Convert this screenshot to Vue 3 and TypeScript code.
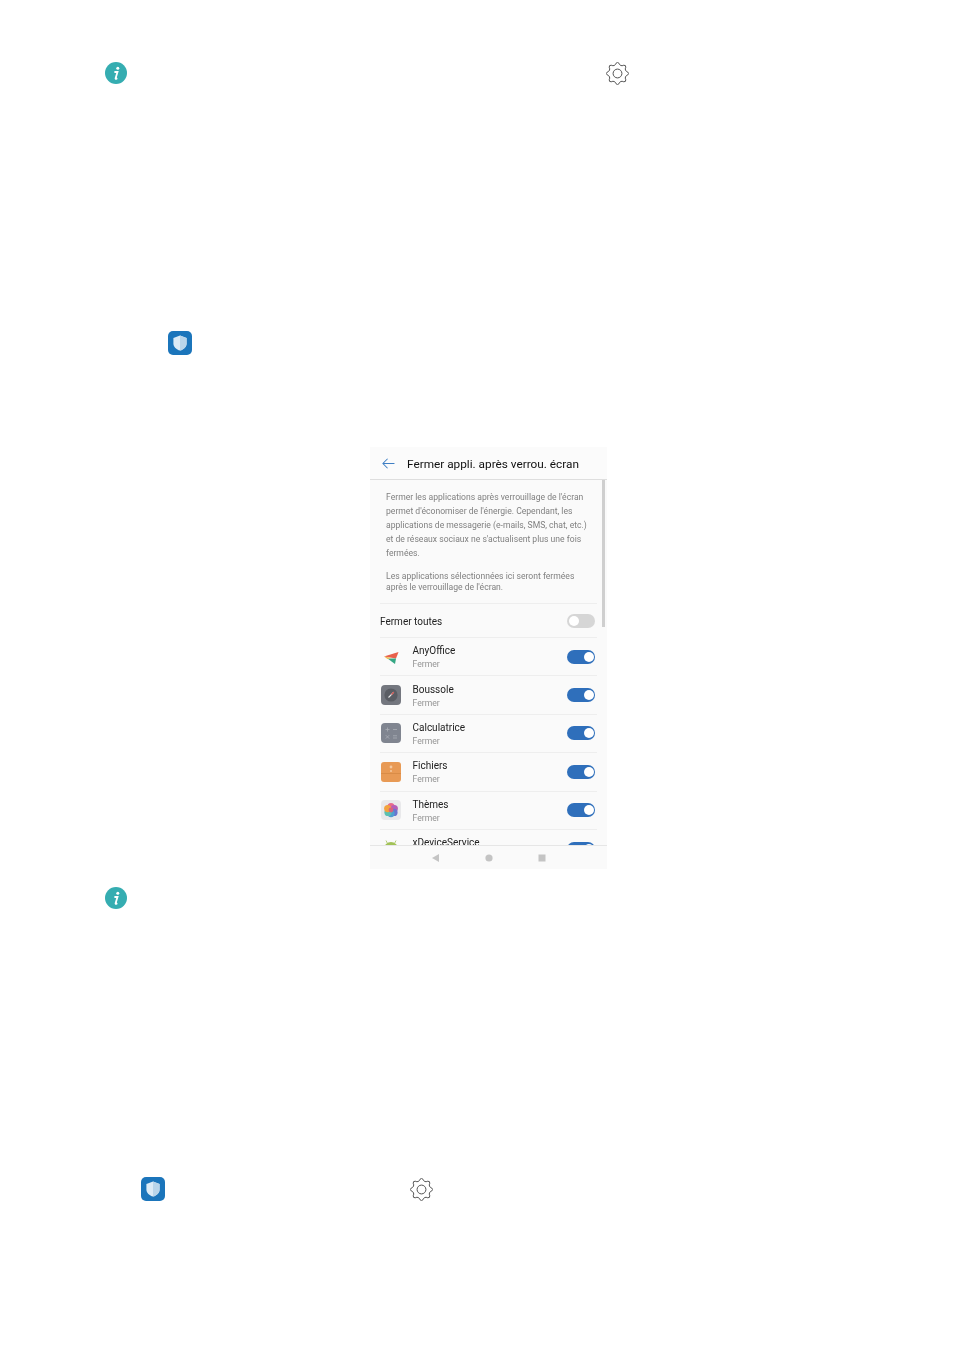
<template>
  <div class="page">
    <div class="note-row first">
      <svg class="info" viewBox="0 0 22 22"><circle cx="11" cy="11" r="11" fill="#35adb1" /><circle cx="12.8" cy="6.2" r="1.5" fill="#fff" /><path d="M9.4 10h3.1l-1.9 6.2q-.2.8.6.6l1.1-.6" fill="none" stroke="#fff" stroke-width="1.8" /></svg>
      <svg class="gear gear-top" viewBox="0 0 24 24"><path :d="gearPath" /><circle cx="12" cy="12" r="4.6" /></svg>
    </div>

    <div class="shield-row one">
      <svg class="shield" viewBox="0 0 24 24"><rect width="24" height="24" rx="5" fill="#1b75bb" /><path d="M12 4.6 18.6 7v5.4c0 3.5-3 5.9-6.6 7.2-3.6-1.3-6.6-3.7-6.6-7.2V7z" fill="#dcebf6" /><path d="M12 4.6 18.6 7v5.4c0 3.5-3 5.9-6.6 7.2z" fill="#b9d5ea" /></svg>
    </div>

    <div class="phone">
      <header class="bar">
        <svg class="back" viewBox="0 0 14 12"><path d="M13.5 6H1M6 .8.9 6 6 11.2" fill="none" stroke="#3f7fc4" stroke-width="1.1" /></svg>
        <span class="title">Fermer appli. après verrou. écran</span>
      </header>

      <div class="content">
        <i class="scroll"></i>
        <div class="desc">
          <p class="para">Fermer les applications après verrouillage de l'écran<br>permet d'économiser de l'énergie. Cependant, les<br>applications de messagerie (e-mails, SMS, chat, etc.)<br>et de réseaux sociaux ne s'actualisent plus une fois<br>fermées.</p>
          <p class="para tight">Les applications sélectionnées ici seront fermées<br>après le verrouillage de l'écran.</p>
        </div>
        <div class="all-row">
          <span class="all-label">Fermer toutes</span>
          <span class="toggle off"><b></b></span>
        </div>
        <div v-for="app in apps" :key="app.name" class="app-row">
          <span class="app-icon">
            <svg v-if="app.kind === 'any'" viewBox="0 0 20 20"><path d="M3 9.5 17.5 5 15 11.5z" fill="#e8604c" /><path d="M6.5 11.5h8.5l-1 5.5z" fill="#35a784" /><path d="M3 9.5l7.5 1.5-4 1z" fill="#f0b84a" /></svg>
            <svg v-else-if="app.kind === 'compass'" viewBox="0 0 20 20"><rect width="20" height="20" rx="4" fill="#74777f" /><circle cx="10" cy="10" r="6.6" fill="#5a5d64" /><path d="M7.5 12.5 12.8 7.2" stroke="#e9e9e9" stroke-width="1.1" /><path d="M10.5 9.5 12.8 7.2" stroke="#d9534f" stroke-width="1.1" /></svg>
            <svg v-else-if="app.kind === 'calc'" viewBox="0 0 20 20"><rect width="20" height="20" rx="4" fill="#808590" /><path d="M4.5 6.5h4M6.5 4.5v4M12 6.5h4M4.8 12.2l3.4 3.4M8.2 12.2l-3.4 3.4M12 12.8h4M12 15h4" stroke="#a9adb5" stroke-width=".8" /></svg>
            <svg v-else-if="app.kind === 'files'" viewBox="0 0 20 20"><rect width="20" height="20" rx="3" fill="#e89a55" /><path d="M0 11.5h20" stroke="#d38642" stroke-width=".7" /><circle cx="10" cy="5" r="1.4" fill="#f5c9a0" /><circle cx="10" cy="9" r="1" fill="#f5c9a0" /></svg>
            <svg v-else-if="app.kind === 'themes'" viewBox="0 0 20 20"><rect width="20" height="20" rx="4" fill="#e9e9eb" /><circle cx="10" cy="6.6" r="3.6" fill="#e86a8e" /><circle cx="13.3" cy="8.6" r="3.6" fill="#b65fb8" /><circle cx="13" cy="12.4" r="3.6" fill="#6a74cf" /><circle cx="10" cy="13.6" r="3.6" fill="#4f9fd0" /><circle cx="7" cy="12.4" r="3.6" fill="#5cc0b0" /><circle cx="6.7" cy="8.6" r="3.6" fill="#f3a13e" /><circle cx="10" cy="10" r="2.4" fill="#d8647c" /></svg>
            <svg v-else viewBox="0 0 20 20"><path d="M3 10a7 7 0 0 1 14 0v8H3z" fill="#a2c257" /><path d="M6.5 4.5 5 1.5M13.5 4.5 15 1.5" stroke="#a2c257" stroke-width=".8" /></svg>
          </span>
          <span class="app-text">
            <span class="app-name">{{ app.name }}</span>
            <span class="app-sub">Fermer</span>
          </span>
          <span class="toggle"><b></b></span>
        </div>
      </div>

      <footer class="nav">
        <svg class="nav-ico" viewBox="0 0 8 8"><path d="M7 0v8L0 4z" fill="#c4c4c4" /></svg>
        <svg class="nav-ico" viewBox="0 0 8 8"><circle cx="4" cy="4" r="3.6" fill="#c4c4c4" /></svg>
        <svg class="nav-ico" viewBox="0 0 8 8"><rect x=".5" y=".5" width="7" height="7" fill="#c4c4c4" /></svg>
      </footer>
    </div>

    <div class="note-row second">
      <svg class="info" viewBox="0 0 22 22"><circle cx="11" cy="11" r="11" fill="#35adb1" /><circle cx="12.8" cy="6.2" r="1.5" fill="#fff" /><path d="M9.4 10h3.1l-1.9 6.2q-.2.8.6.6l1.1-.6" fill="none" stroke="#fff" stroke-width="1.8" /></svg>
    </div>

    <div class="shield-row two">
      <svg class="shield" viewBox="0 0 24 24"><rect width="24" height="24" rx="5" fill="#1b75bb" /><path d="M12 4.6 18.6 7v5.4c0 3.5-3 5.9-6.6 7.2-3.6-1.3-6.6-3.7-6.6-7.2V7z" fill="#dcebf6" /><path d="M12 4.6 18.6 7v5.4c0 3.5-3 5.9-6.6 7.2z" fill="#b9d5ea" /></svg>
      <svg class="gear gear-bottom" viewBox="0 0 24 24"><path :d="gearPath" /><circle cx="12" cy="12" r="4.6" /></svg>
    </div>
  </div>
</template>

<script setup lang="ts">
const apps = [
  { name: 'AnyOffice', kind: 'any' },
  { name: 'Boussole', kind: 'compass' },
  { name: 'Calculatrice', kind: 'calc' },
  { name: 'Fichiers', kind: 'files' },
  { name: 'Thèmes', kind: 'themes' },
  { name: 'xDeviceService', kind: 'android' },
]

// eight lobed gear outline
const gearPath = (() => {
  const lobes = 8
  let d = ''
  for (let i = 0; i < lobes; i++) {
    const a = (i / lobes) * Math.PI * 2 - Math.PI / 2
    const step = Math.PI / lobes
    const pt = (r: number, t: number) => `${(12 + r * Math.cos(t)).toFixed(2)} ${(12 + r * Math.sin(t)).toFixed(2)}`
    d += `${i ? 'L' : 'M'}${pt(10.8, a - step * 0.35)} Q${pt(12.6, a)} ${pt(10.8, a + step * 0.35)} Q${pt(7.6, a + step)} ${pt(10.8, a + step * 1.65)} `
  }
  return d + 'Z'
})()
</script>

<style scoped>
.page {
  height: 1350px;
  overflow: hidden;
  background: #fff;
  font-family: Roboto, "Liberation Sans", sans-serif;
}

.note-row {
  display: flex;
  padding-left: 105px;
}
.first {
  padding-top: 62px;
}
.second {
  margin-top: 18px;
}
.info {
  width: 22px;
  height: 22px;
  flex: none;
}
.gear {
  width: 23px;
  height: 23px;
  flex: none;
  fill: none;
  stroke: #4a4a4a;
  stroke-width: 1;
}
.gear-top {
  margin-left: 479px;
}
.gear-bottom {
  margin-left: 245px;
}

.shield-row {
  display: flex;
  align-items: center;
}
.one {
  margin-top: 246px;
  padding-left: 168px;
}
.two {
  margin-top: 268px;
  padding-left: 141px;
}
.shield {
  width: 24px;
  height: 24px;
  flex: none;
}

.phone {
  width: 237px;
  height: 422px;
  margin: 92px 0 0 370px;
  display: flex;
  flex-direction: column;
  background: #fafafa;
  filter: blur(0.4px);
}
.bar {
  height: 33px;
  flex: none;
  display: flex;
  align-items: center;
  gap: 12px;
  padding: 1px 0 0 12px;
  box-sizing: border-box;
  background: #fbfbfb;
  border-bottom: 1px solid #dedede;
}
.back {
  width: 13px;
  height: 11px;
}
.title {
  font-size: 11.8px;
  color: #111;
}

.content {
  position: relative;
  flex: 1;
  overflow: hidden;
  padding: 0 10px;
}
.scroll {
  position: absolute;
  top: 0;
  right: 2px;
  width: 3px;
  height: 147px;
  background: #cfcfcf;
}
.desc {
  padding: 10px 6px 10px;
  font-size: 8.6px;
  color: #808080;
  border-bottom: 1px solid #eee;
}
.para {
  margin: 0;
  line-height: 14px;
}
.tight {
  margin-top: 11px;
  line-height: 11px;
}
.all-row {
  height: 33px;
  display: flex;
  align-items: center;
  justify-content: space-between;
  padding-right: 2px;
  font-size: 10px;
  color: #222;
  border-bottom: 1px solid #eee;
}
.all-label {
  padding-top: 2px;
}

.app-row {
  height: 38.4px;
  flex: none;
  box-sizing: border-box;
  display: flex;
  align-items: center;
  padding-right: 2px;
  border-bottom: 1px solid #eee;
}
.app-icon {
  width: 21px;
  height: 20px;
  flex: none;
}
.app-icon svg {
  display: block;
  width: 20px;
  height: 20px;
  margin-left: 1px;
}
.app-text {
  flex: 1;
  display: flex;
  flex-direction: column;
  gap: 2px;
  padding: 1px 0 0 11.5px;
}
.app-name {
  font-size: 10px;
  line-height: 12px;
  color: #222;
}
.app-sub {
  font-size: 8.6px;
  line-height: 10px;
  color: #949494;
}

.toggle {
  width: 28px;
  height: 14px;
  flex: none;
  display: flex;
  justify-content: flex-end;
  align-items: center;
  padding: 0 1.5px;
  box-sizing: border-box;
  border-radius: 7px;
  background: #2f6fbb;
}
.toggle b {
  width: 10px;
  height: 10px;
  border-radius: 50%;
  background: #fff;
}
.toggle.off {
  justify-content: flex-start;
  background: #d6d6d6;
}

.nav {
  height: 24px;
  flex: none;
  display: flex;
  justify-content: center;
  align-items: center;
  gap: 45px;
  box-sizing: border-box;
  background: #fafafa;
  border-top: 1px solid #e6e6e6;
}
.nav-ico {
  width: 8px;
  height: 8px;
}
</style>
